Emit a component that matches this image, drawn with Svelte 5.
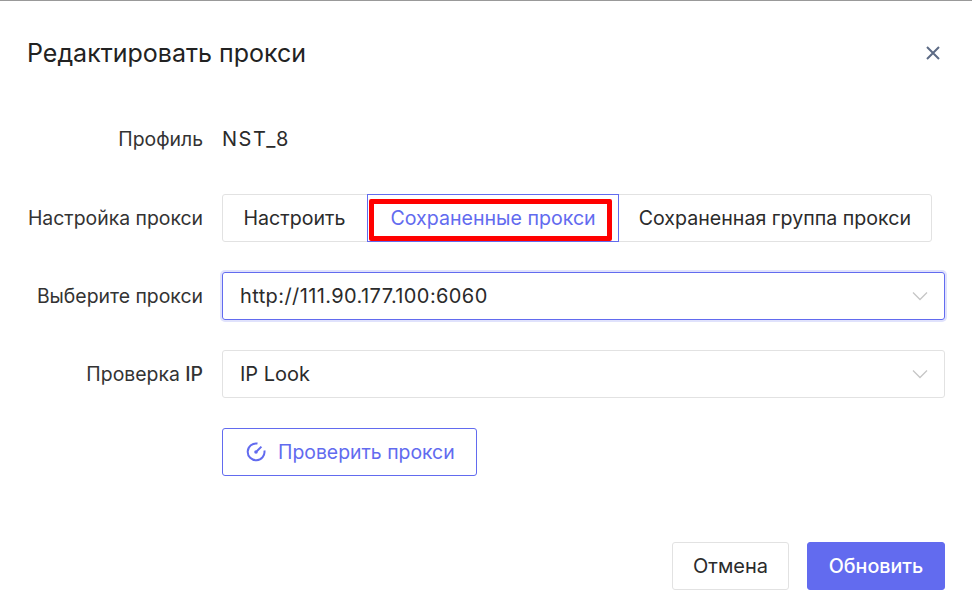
<script>
	let mode = 'saved';
	const tabs = [
		{ id: 'custom', label: 'Настроить' },
		{ id: 'saved', label: 'Сохраненные прокси' },
		{ id: 'group', label: 'Сохраненная группа прокси' }
	];
</script>

<div class="dialog">
	<header>
		<h2>Редактировать прокси</h2>
		<button class="close" aria-label="Закрыть">
			<svg width="16" height="16" viewBox="0 0 16 16"><path d="M2 2l12 12M14 2L2 14" /></svg>
		</button>
	</header>

	<div class="form">
		<div class="row plain">
			<span class="label">Профиль</span>
			<span class="value">NST_8</span>
		</div>

		<div class="row">
			<span class="label">Настройка прокси</span>
			<div class="tabs">
				{#each tabs as tab}
					<button class="tab" class:active={mode === tab.id} onclick={() => (mode = tab.id)}>
						{tab.label}
						{#if tab.id === 'saved'}<span class="mark"></span>{/if}
					</button>
				{/each}
			</div>
		</div>

		<div class="row">
			<span class="label">Выберите прокси</span>
			<div class="select focused">
				<span class="addr">http://111.90.177.100:6060</span>
				<svg width="16" height="10" viewBox="0 0 16 10"><path d="M1 1.5l7 7 7-7" /></svg>
			</div>
		</div>

		<div class="row">
			<span class="label">Проверка <b>IP</b></span>
			<div class="select">
				<span>IP Look</span>
				<svg width="16" height="10" viewBox="0 0 16 10"><path d="M1 1.5l7 7 7-7" /></svg>
			</div>
		</div>

		<div class="row">
			<span class="label"></span>
			<button class="check">
				<svg width="20" height="20" viewBox="0 0 20 20">
					<path d="M11.5 1.6A8.4 8.4 0 1 0 18.4 8.5" />
					<path d="M15.4 4.6L10.8 9.2" />
					<circle cx="10" cy="10" r="1.8" />
				</svg>
				Проверить прокси
			</button>
		</div>
	</div>

	<footer>
		<button class="btn">Отмена</button>
		<button class="btn primary">Обновить</button>
	</footer>
</div>

<style>
	:global(body) {
		background: #fff;
	}
	.dialog {
		width: 972px;
		height: 612px;
		box-sizing: border-box;
		border-top: 1px solid #999;
		padding: 0 27px;
		font-family: Inter, 'Noto Sans', sans-serif;
		color: #2b2b2b;
		font-size: 20px;
	}
	button {
		font-family: inherit;
		font-size: 20px;
		background: #fff;
		cursor: pointer;
		padding: 0;
	}
	header {
		display: flex;
		justify-content: space-between;
		align-items: center;
		height: 104px;
		padding-bottom: 1px;
		box-sizing: border-box;
	}
	h2 {
		margin: 0;
		font-size: 25px;
		font-weight: 400;
		color: #222;
	}
	.close {
		border: none;
		display: flex;
		margin-right: 4px;
	}
	.close path {
		stroke: #5d6b85;
		stroke-width: 2;
		fill: none;
	}
	.form {
		display: flex;
		flex-direction: column;
		gap: 30px;
		padding-bottom: 66px;
	}
	.row {
		display: flex;
		align-items: center;
		gap: 19px;
		height: 48px;
	}
	.row.plain {
		height: 30px;
		margin: 19px 0 10px;
	}
	.label {
		width: 176px;
		flex: none;
		text-align: right;
		font-size: 19.4px;
		color: #333;
		white-space: nowrap;
	}
	.label b {
		font-weight: 500;
	}
	.value {
		letter-spacing: 1.5px;
	}
	.tabs {
		display: flex;
		height: 48px;
	}
	.tab {
		position: relative;
		border: 1px solid #e2e2e2;
		height: 48px;
		padding: 0 22px;
		margin-left: -1px;
		font-size: 19.6px;
		color: #2b2b2b;
		white-space: nowrap;
	}
	.tab:first-child {
		border-radius: 3px 0 0 3px;
		margin-left: 0;
		padding: 0 22px 0 20.5px;
	}
	.tab:last-child {
		border-radius: 0 3px 3px 0;
		padding: 0 20px;
	}
	.tab.active {
		border-color: #626bef;
		color: #626bef;
		z-index: 1;
	}
	.mark {
		position: absolute;
		left: 1px;
		right: 6px;
		top: 4px;
		bottom: 0;
		border: 5px solid #f00;
		border-radius: 2px;
	}
	.select {
		width: 723px;
		height: 48px;
		box-sizing: border-box;
		border: 1px solid #e2e2e2;
		border-radius: 3px;
		display: flex;
		align-items: center;
		justify-content: space-between;
		padding: 0 16px 0 17px;
	}
	.addr {
		letter-spacing: 0.4px;
	}
	.select.focused {
		border-color: #626bef;
		box-shadow: 0 0 0 2px #e0e2fc;
	}
	.select svg path {
		stroke: #c6c6c6;
		stroke-width: 1.3;
		fill: none;
	}
	.check {
		display: flex;
		align-items: center;
		gap: 12px;
		width: 255px;
		height: 48px;
		box-sizing: border-box;
		border: 1px solid #626bef;
		border-radius: 3px;
		color: #626bef;
		font-size: 19.4px;
		padding-left: 23px;
	}
	.check path {
		stroke: #626bef;
		stroke-width: 2;
		fill: none;
	}
	.check circle {
		fill: #626bef;
	}
	footer {
		display: flex;
		justify-content: flex-end;
		gap: 18px;
	}
	.btn {
		height: 48px;
		box-sizing: border-box;
		border: 1px solid #e2e2e2;
		border-radius: 3px;
		width: 117px;
		color: #2b2b2b;
	}
	.btn.primary {
		width: 138px;
		background: #626bef;
		border-color: #626bef;
		color: #fff;
		font-size: 19.7px;
		font-weight: 500;
	}
</style>
